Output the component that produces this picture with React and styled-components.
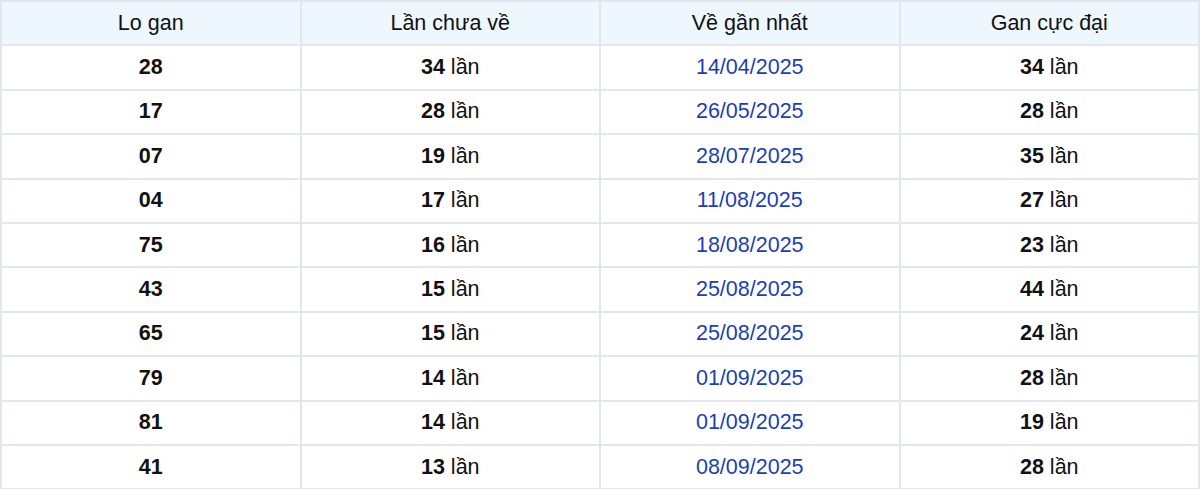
import styled, { createGlobalStyle } from "styled-components";

const GlobalStyle = createGlobalStyle`
    html, body {
        margin: 0;
        padding: 0;
        background: #ffffff;
    }
    body {
        font-family: "Liberation Sans", Arial, sans-serif;
    }
`;

const rows = [
    { lo: "28", miss: 34, last: "14/04/2025", max: 34 },
    { lo: "17", miss: 28, last: "26/05/2025", max: 28 },
    { lo: "07", miss: 19, last: "28/07/2025", max: 35 },
    { lo: "04", miss: 17, last: "11/08/2025", max: 27 },
    { lo: "75", miss: 16, last: "18/08/2025", max: 23 },
    { lo: "43", miss: 15, last: "25/08/2025", max: 44 },
    { lo: "65", miss: 15, last: "25/08/2025", max: 24 },
    { lo: "79", miss: 14, last: "01/09/2025", max: 28 },
    { lo: "81", miss: 14, last: "01/09/2025", max: 19 },
    { lo: "41", miss: 13, last: "08/09/2025", max: 28 },
];

const App = () => {
    return (
        <>
            <GlobalStyle />
            <StTable>
                <thead>
                    <StRow>
                        <StHead>Lo gan</StHead>
                        <StHead>Lần chưa về</StHead>
                        <StHead>Về gần nhất</StHead>
                        <StHead>Gan cực đại</StHead>
                    </StRow>
                </thead>
                <tbody>
                    {rows.map((r) => (
                        <StRow key={r.lo}>
                            <StCell><b>{r.lo}</b></StCell>
                            <StCell><b>{r.miss}</b> lần</StCell>
                            <StCell $date>{r.last}</StCell>
                            <StCell><b>{r.max}</b> lần</StCell>
                        </StRow>
                    ))}
                </tbody>
            </StTable>
        </>
    );
};

export default App;

const StTable = styled.table`
    width: 1200px;
    border-collapse: collapse;
    table-layout: fixed;
    font-size: 21.5px;
    color: #111111;
`;
const StRow = styled.tr`
    height: 44.4px;
`;
const StHead = styled.th`
    font-weight: normal;
    background: #eef6fe;
    border: 2px solid #e3e6ea;
    text-align: center;
    padding: 0;
`;
const StCell = styled.td`
    border: 2px solid #e3e6ea;
    text-align: center;
    padding: 0;
    color: ${({ $date }) => ($date ? "#1a3fb4" : "#111111")};

    & > b {
        font-weight: bold;
    }
`;
